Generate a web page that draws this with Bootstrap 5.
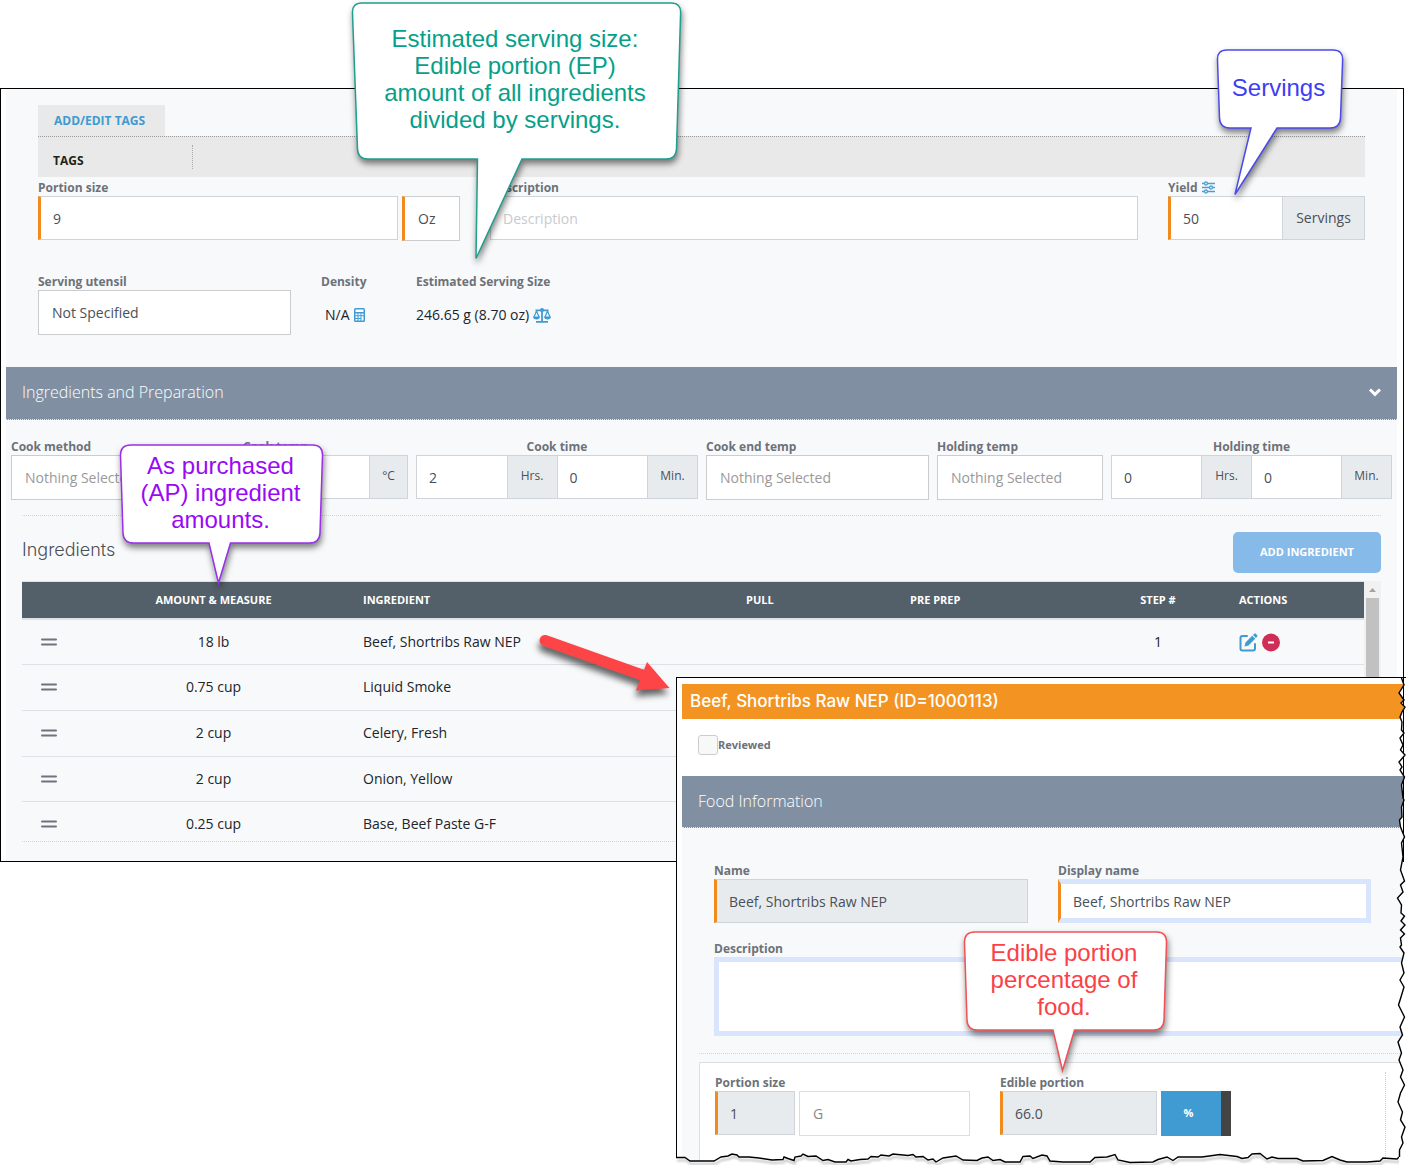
<!DOCTYPE html>
<html lang="en">
<head>
<meta charset="utf-8">
<meta name="viewport" content="width=device-width, initial-scale=1">
<title>Recipe ingredients and edible portion</title>
<link href="https://cdn.jsdelivr.net/npm/bootstrap@5.3.0/dist/css/bootstrap.min.css" rel="stylesheet">
<style>
  body { font-family: "Open Sans", "Noto Sans", sans-serif; font-size: 14px; line-height: 20px; color: #212529; background: #fff; }
  a { text-decoration: none; }
  svg { display: block; flex: none; }
  .stage { padding: 88px 7px 8px 0; overflow: hidden; }
  .shot { border: 1px solid #000; padding: 0 6px 0 5px; }
  .surface { background: #f8f9fb; }
  .tag-tab { display: inline-block; height: 31px; line-height: 31px; min-width: 127px; padding: 0 16px; background: #e9e9e9; color: #3e9bd0; font-size: 12px; font-weight: 700; }
  .tag-bar { height: 41px; background: #e9e9e9; border-top: 1px dotted #999; padding: 8px 15px 0; font-size: 12px; }
  .tag-bar strong { width: 140px; height: 24px; line-height: 31px; border-right: 1px dotted #aaa; color: #222; }
  .first { padding-top: 2px; }
  .mt-px { margin-top: 1px; }
  .desc-col { margin: 0 30px; }
  .second { padding: 32px 0; }
  .dens { width: 95px; margin-left: 30px; }
  .second .val { padding-top: 15px; white-space: nowrap; }
  .lbl { display: block; height: 17px; line-height: 17px; font-size: 12px; font-weight: 700; color: #6c7278; margin: 0; white-space: nowrap; }
  .fld.form-control { height: 44px; border: 1px solid #ced4da; border-radius: 0; padding: 0 12px; font-size: 14px; color: #495057; background: #fff; min-width: 0; }
  select.fld.form-control { height: 45px; border-color: #ccc; padding: 0 9px; }
  select.fld.unset.form-control { color: #999; }
  .fld.form-control::placeholder { color: #c8cacd; }
  .fld.req.form-control { border-left: 3px solid #f28b1d; }
  .fld.locked.form-control { background: #e8ebee; }
  .fld.ring.form-control { border: 5px solid #d9e5fd; padding: 0 10px; }
  .fld.ring.req.form-control { border-left: 3px solid #f28b1d; padding-left: 12px; }
  .input-group > .unit { border-radius: 0; border: 1px solid #ced4da; background: #e8ebee; color: #495057; justify-content: center; padding: 0 0 2px; font-size: 14px; height: 44px; }
  .input-group > .unit-s { font-size: 12px; }
  .w-f { width: 360px; } .w-oz { width: 58px; } .w-yield { width: 197px; } .w-servunit { width: 83px; }
  .w-utensil { width: 253px; }
  .u38 { width: 39px; } .u50 { width: 51px; }
  .bar { background: #8090a2; color: #fff; font-size: 16px; font-weight: 300; height: 53px; border-bottom: 1px dotted #e6e9ed; padding: 0 16px 2px; }
  .cook { padding: 18px 5px 0; gap: 8px; }
  .cook > .c1 { flex: 224 1 0; } .cook > .c2 { flex: 165 1 0; } .cook > .c3 { flex: 282 1 0; }
  .cook > .c4 { flex: 223 1 0; } .cook > .c5 { flex: 166 1 0; } .cook > .c6 { flex: 281 1 0; }
  .cook select.fld.form-control, .second select.fld.form-control, .w-oz select.fld.form-control { text-indent: 4px; }
  .ingr-area { padding-top: 15px; }
  .sep { border-top: 1px dotted #d4d7da; }
  .h-ingr { font-family: Inter, sans-serif; font-size: 18px; font-weight: 300; color: #4b4f56; line-height: 20px; margin: 8px 0 0; }
  .btn.add { width: 148px; height: 41px; padding: 0; border: 0; border-radius: 5px; background: #86bbe9; color: #fff; font-size: 11px; font-weight: 700; }
  .grid-wrap { height: 261px; overflow: hidden; border-bottom: 1px dotted #d4d7da; }
  .ingr { table-layout: fixed; margin: 0; border-top: 1px solid #dee2e6; }
  .ingr > thead > tr > th { background: #546069; color: #fff; font-size: 11px; font-weight: 700; line-height: 20px; padding: 8px 12px; border-bottom: 2px solid #dee2e6; white-space: nowrap; }
  .ingr > tbody > tr > td { background: transparent; padding: 12px; line-height: 20px; border-bottom: 1px solid #dee2e6; color: #212529; vertical-align: middle; }
  .ingr > tbody > tr.tall > td { padding-bottom: 13px; }
  .ingr .w1 { width: 54px; } .ingr .w2 { width: 275px; } .ingr .w4 { width: 164px; } .ingr .w5 { width: 191px; } .ingr .w6 { width: 138px; } .ingr .w7 { width: 137px; }
  .track { width: 17px; background: #f1f1f1; padding: 0 2px; }
  .track .thumb { height: 244px; background: #c1c1c1; }
  .icon-btn { border: 0; background: none; padding: 0; display: block; }
  .tail { height: 19px; }
  .food { position: relative; z-index: 2; margin: -185px -2px 0 676px; height: 488px; border-top: 1px solid #000; padding: 6px 0 0 6px; background: #fff; overflow: hidden; }
  .food::before { content: ""; position: absolute; left: 0; top: 0; bottom: 7px; width: 1px; background: #000; }
  .food-title { background: #f39422; color: #fff; font-family: Inter, sans-serif; font-size: 17px; font-weight: 500; line-height: 35px; padding: 0 8px; margin: 0; }
  .food .bar { height: 52px; }
  .review { height: 57px; padding: 16px 16px 0; }
  .review .form-check-input { width: 20px; height: 20px; margin: 0; border: 1px solid #ccc; border-radius: 3px; background: #f7f9f8; }
  .review label { font-size: 11px; font-weight: 700; color: #6c7278; line-height: 20px; }
  .name-row { padding: 34px 35px 0 32px; gap: 30px; }
  .w-name { flex: 314 1 0; } .w-disp { flex: 313 1 0; }
  .desc-row { margin: 17px 0 0 32px; }
  textarea.fld.ring.form-control { height: 79px; resize: none; display: block; border-right: 0; }
  .food-sep { margin: 17px 0 8px 17px; }
  .portion { border: solid #dcdee1; border-width: 1px 0 0 1px; background: #fff; margin-left: 17px; height: 112px; padding: 11px 0 0 15px; }
  .portion .cells { flex: 1; }
  .portion .edge { width: 21px; border-left: 1px dotted #ccc; margin-top: -2px; }
  .w-p1 { width: 80px; } .w-g { width: 171px; } .w-ep { width: 157px; margin-left: 30px; }
  select.fld.soft.form-control { border-color: #ddd; color: #888; text-indent: 4px; }
  .btn.pct { width: 70px; height: 45px; border: 0; border-right: 10px solid #444; border-radius: 0; background: #3f9bd1; color: #fff; font-size: 11px; font-weight: 700; padding: 0 5px 0 0; }
  .tear-r { position: absolute; right: 0; top: -1px; }
  .tear-b { position: absolute; left: 0; bottom: 0; width: calc(100% - 7px); height: 24px; }
  .tear-b .rip { filter: drop-shadow(1px 3px 1px rgba(0,0,0,.3)); }
  .callout { position: absolute; z-index: 3; font-family: "Liberation Sans", Arial, sans-serif; font-size: 24px; line-height: 27px; text-align: center; }
  .callout svg { position: absolute; left: 0; top: 0; overflow: visible; filter: drop-shadow(1px 4px 3px rgba(0,0,0,.5)); }
  .callout p { position: relative; margin: 0; white-space: nowrap; }
  .c-est { left: 350px; top: 0; width: 330px; padding-top: 25px; color: #069f89; }
  .c-srv { left: 1215px; top: 48px; width: 127px; padding-top: 26px; color: #3d3df5; }
  .c-ap { left: 119px; top: 443px; width: 203px; padding-top: 9px; color: #9a09f5; }
  .c-ep { left: 962px; top: 930px; width: 204px; padding-top: 9px; color: #fb4147; }
  .arrow { position: absolute; z-index: 3; left: 530px; top: 625px; overflow: visible; filter: drop-shadow(-1px 6px 3px rgba(0,0,0,.6)); }
</style>
</head>
<body>
<main class="stage position-relative">
  <section class="shot">
    <div class="surface">
      <div class="px-4 mx-2 pt-3">
        <a class="tag-tab" href="#tags">ADD/EDIT TAGS</a>
        <div class="tag-bar d-flex" id="tags"><strong>TAGS</strong></div>
        <div class="d-flex first">
          <div class="w-f"><label class="lbl" for="portion">Portion size</label><input id="portion" class="form-control fld req" value="9"></div>
          <div class="w-oz ms-1 pt-3 mt-px"><select class="form-control fld req" aria-label="Portion unit"><option>Oz</option></select></div>
          <div class="flex-grow-1 desc-col"><label class="lbl" for="desc">Description</label><input id="desc" class="form-control fld" placeholder="Description"></div>
          <div class="w-yield">
            <label class="lbl d-flex align-items-center gap-1" for="yield">Yield
              <svg width="13" height="13" viewBox="0 0 13 13" fill="none" stroke="#4a9fd4" stroke-width="1.3"><path d="M0 2.500h2.500M5.500 2.500H13M0 6.500h7.500M10.500 6.500H13M0 10.500h2.500M5.500 10.500H13"/><circle cx="4" cy="2.500" r="1.500"/><circle cx="9" cy="6.500" r="1.500"/><circle cx="4" cy="10.500" r="1.500"/></svg>
            </label>
            <div class="input-group flex-nowrap"><input id="yield" class="form-control fld req" value="50"><span class="input-group-text unit w-servunit">Servings</span></div>
          </div>
        </div>
        <div class="d-flex second">
          <div class="w-utensil"><label class="lbl" for="utensil">Serving utensil</label><select id="utensil" class="form-control fld"><option>Not Specified</option></select></div>
          <div class="dens"><span class="lbl">Density</span>
            <div class="val d-flex align-items-center gap-1 ps-1">N/A
              <svg width="11" height="14" viewBox="0 0 11 14"><rect width="11" height="14" rx="1.500" fill="#3f9bd1"/><path fill="#fff" d="M1.500 1.500h8v2.500h-8zM1.500 5.500h2v1.700h-2zM4.500 5.500h2v1.700h-2zM7.500 5.500h2v1.700h-2zM1.500 8.200h2v1.700h-2zM4.500 8.200h2v1.700h-2zM7.500 8.200h2v4.300h-2zM1.500 10.900h2v1.600h-2zM4.500 10.900h2v1.600h-2z"/></svg>
            </div>
          </div>
          <div><span class="lbl">Estimated Serving Size</span>
            <div class="val d-flex align-items-center gap-1">246.65 g (8.70 oz)
              <svg width="18" height="15" viewBox="0 0 18 15" fill="none" stroke="#3f9bd1"><path stroke-width="1.800" d="M2.500 2.300h13M9 1v12M3 13.800h12"/><path stroke-width="1.200" d="M3.500 3L1 9M3.500 3L6 9M14.500 3L12 9M14.500 3L17 9"/><path fill="#3f9bd1" stroke="none" d="M0 8.500h7c0 2-1.500 3-3.500 3S0 10.500 0 8.500zM11 8.500h7c0 2-1.500 3-3.500 3s-3.500-1-3.500-3z"/><circle cx="9" cy="2" r="2" fill="#3f9bd1" stroke="none"/></svg>
            </div>
          </div>
        </div>
      </div>

      <header class="bar d-flex align-items-center justify-content-between">Ingredients and Preparation
        <svg width="12" height="9" viewBox="0 0 12 9" fill="none" stroke="#fff" stroke-width="3"><path d="M1 1.500l5 4.800 5-4.800"/></svg>
      </header>

      <div class="cook d-flex">
        <div class="c1"><label class="lbl" for="cm">Cook method</label><select id="cm" class="form-control fld unset"><option>Nothing Selected</option></select></div>
        <div class="c2"><label class="lbl" for="ct">Cook temp</label><div class="input-group flex-nowrap"><input id="ct" class="form-control fld"><span class="input-group-text unit unit-s u38">°C</span></div></div>
        <div class="c3"><label class="lbl text-center" for="ch">Cook time</label><div class="input-group flex-nowrap">
          <input id="ch" class="form-control fld" value="2"><span class="input-group-text unit unit-s u50">Hrs.</span>
          <input class="form-control fld" value="0" aria-label="Cook time minutes"><span class="input-group-text unit unit-s u50">Min.</span></div></div>
        <div class="c4"><label class="lbl" for="ce">Cook end temp</label><select id="ce" class="form-control fld unset"><option>Nothing Selected</option></select></div>
        <div class="c5"><label class="lbl" for="ht">Holding temp</label><select id="ht" class="form-control fld unset"><option>Nothing Selected</option></select></div>
        <div class="c6"><label class="lbl text-center" for="hh">Holding time</label><div class="input-group flex-nowrap">
          <input id="hh" class="form-control fld" value="0"><span class="input-group-text unit unit-s u50">Hrs.</span>
          <input class="form-control fld" value="0" aria-label="Holding time minutes"><span class="input-group-text unit unit-s u50">Min.</span></div></div>
      </div>

      <div class="mx-3 ingr-area">
        <div class="sep pt-3 d-flex align-items-start justify-content-between">
          <h2 class="h-ingr">Ingredients</h2>
          <button type="button" class="btn add">ADD INGREDIENT</button>
        </div>
        <div class="grid-wrap d-flex mt-2">
          <table class="table ingr">
            <thead><tr><th class="w1"></th><th class="w2 text-center">AMOUNT &amp; MEASURE</th><th>INGREDIENT</th><th class="w4">PULL</th><th class="w5">PRE PREP</th><th class="w6 text-center">STEP #</th><th class="w7">ACTIONS</th></tr></thead>
            <tbody>
              <tr><td><svg class="mx-auto" width="16" height="8"><path stroke="#6c757d" stroke-width="2" stroke-linecap="round" d="M1 1.500h14M1 6.500h14"/></svg></td><td class="text-center">18 lb</td><td>Beef, Shortribs Raw NEP</td><td></td><td></td><td class="text-center">1</td>
                <td><div class="d-flex gap-1">
                  <button type="button" class="icon-btn" aria-label="Edit"><svg width="19" height="19" viewBox="0 0 19 19"><path fill="none" stroke="#3f9bd1" stroke-width="2" stroke-linecap="round" d="M8 3H3.500Q1.500 3 1.500 5v10.500q0 2 2 2H14q2 0 2-2V11"/><path fill="#3f9bd1" d="M5.500 13.500l1-4 6.700-6.700 3 3-6.700 6.700zM14 2l1.300-1.300q.7-.7 1.500 0L18.200 2.200q.7.700 0 1.400L16.900 5z"/></svg></button>
                  <button type="button" class="icon-btn" aria-label="Remove"><svg width="18" height="19" viewBox="0 0 18 19"><circle cx="9" cy="9.500" r="9" fill="#cf2f57"/><path d="M6 9.500h6" stroke="#fff" stroke-width="2"/></svg></button>
                </div></td></tr>
              <tr class="tall"><td><svg class="mx-auto" width="16" height="8"><path stroke="#6c757d" stroke-width="2" stroke-linecap="round" d="M1 1.500h14M1 6.500h14"/></svg></td><td class="text-center">0.75 cup</td><td>Liquid Smoke</td><td></td><td></td><td></td><td></td></tr>
              <tr class="tall"><td><svg class="mx-auto" width="16" height="8"><path stroke="#6c757d" stroke-width="2" stroke-linecap="round" d="M1 1.500h14M1 6.500h14"/></svg></td><td class="text-center">2 cup</td><td>Celery, Fresh</td><td></td><td></td><td></td><td></td></tr>
              <tr><td><svg class="mx-auto" width="16" height="8"><path stroke="#6c757d" stroke-width="2" stroke-linecap="round" d="M1 1.500h14M1 6.500h14"/></svg></td><td class="text-center">2 cup</td><td>Onion, Yellow</td><td></td><td></td><td></td><td></td></tr>
              <tr><td><svg class="mx-auto" width="16" height="8"><path stroke="#6c757d" stroke-width="2" stroke-linecap="round" d="M1 1.500h14M1 6.500h14"/></svg></td><td class="text-center">0.25 cup</td><td>Base, Beef Paste G-F</td><td></td><td></td><td></td><td></td></tr>
            </tbody>
          </table>
          <div class="track"><svg width="13" height="17"><path fill="#a3a3a3" d="M3 11h7L6.500 7z"/></svg><div class="thumb"></div></div>
        </div>
      </div>
      <div class="tail"></div>
    </div>
  </section>

  <section class="food">
    <h2 class="food-title">Beef, Shortribs Raw NEP (ID=1000113)</h2>
    <div class="review d-flex"><input type="checkbox" class="form-check-input" id="rev"><label for="rev">Reviewed</label></div>
    <header class="bar d-flex align-items-center">Food Information</header>
    <div class="surface">
      <div class="name-row d-flex">
        <div class="w-name"><label class="lbl" for="nm">Name</label><input id="nm" class="form-control fld req locked" value="Beef, Shortribs Raw NEP" readonly></div>
        <div class="w-disp"><label class="lbl" for="dn">Display name</label><input id="dn" class="form-control fld ring req" value="Beef, Shortribs Raw NEP"></div>
      </div>
      <div class="desc-row"><label class="lbl" for="fd">Description</label><textarea id="fd" class="form-control fld ring"></textarea></div>
      <div class="sep food-sep"></div>
      <div class="portion d-flex">
        <div class="cells d-flex">
          <div class="w-p1"><label class="lbl" for="ps">Portion size</label><input id="ps" class="form-control fld req locked" value="1" readonly></div>
          <div class="w-g ms-1 pt-3 mt-px"><select class="form-control fld soft" aria-label="Unit"><option>G</option></select></div>
          <div class="w-ep"><label class="lbl" for="ep">Edible portion</label><input id="ep" class="form-control fld req locked" value="66.0" readonly></div>
          <div class="ms-1 pt-3 mt-px"><button type="button" class="btn pct">%</button></div>
        </div>
        <div class="edge"></div>
      </div>
    </div>
    <svg class="tear-b" viewBox="0 0 723 24" preserveAspectRatio="none">
      <path fill="#fff" d="M-2 26V16.500H9L14 20H38L45 16L52 15L56 13L61 14L63 16L73 16L83 17L96 19L107 18.500L108 16L112 17.500L118 19.500L119 16L125 15L127 13L132 15.500L140 15L147 19.500L152 18.500L159 21H170L172 18.500L175 20L184 18.500L192 18L195 15.500L202 16L205 14L213 15L217 13L232 14.500L237 13.500L240 16L247 15.500L252 19L257 18L260 21L267 17L280 15L287 19L301 19.500L306 17L312 16L317 19.500L324 18.500L329 21L344 21L347 15.500L354 15L357 17.500L366 14L371 15L374 20L387 21L414 21L419 16.500L431 16L439 13.500L442 19L454 21.500L477 21L482 18.500L491 16L497 19.500L502 16L526 16L544 13.500L561 15.500L566 17.500L572 16.500L576 13L584 12.500L591 18L596 16L602 17.500L621 17.500L627 20L647 19.500L656 15.500L664 19L671 21L691 21L704 20L707 17L721 18L724 15V26z"/>
      <path class="rip" fill="none" stroke="#000" stroke-width="1.400" d="M0 16.500H9L14 20H38L45 16L52 15L56 13L61 14L63 16L73 16L83 17L96 19L107 18.500L108 16L112 17.500L118 19.500L119 16L125 15L127 13L132 15.500L140 15L147 19.500L152 18.500L159 21H170L172 18.500L175 20L184 18.500L192 18L195 15.500L202 16L205 14L213 15L217 13L232 14.500L237 13.500L240 16L247 15.500L252 19L257 18L260 21L267 17L280 15L287 19L301 19.500L306 17L312 16L317 19.500L324 18.500L329 21L344 21L347 15.500L354 15L357 17.500L366 14L371 15L374 20L387 21L414 21L419 16.500L431 16L439 13.500L442 19L454 21.500L477 21L482 18.500L491 16L497 19.500L502 16L526 16L544 13.500L561 15.500L566 17.500L572 16.500L576 13L584 12.500L591 18L596 16L602 17.500L621 17.500L627 20L647 19.500L656 15.500L664 19L671 21L691 21L704 20L707 17L721 18L723 16"/>
    </svg>
    <svg class="tear-r" width="14" height="488" viewBox="1392 677 14 488">
      <defs><clipPath id="out"><path d="M1406 677H1401.500L1404 685 1399 693 1404 700 1401 703 1405 707 1402 712 1400 717 1402 722 1401.500 730 1404 733 1400 738 1403 745 1400.500 750 1405 755 1399 762 1402 767 1400 770 1404.500 777 1401.500 785 1403 798 1404 800 1401.500 807 1402 817 1399.500 820 1400.500 827 1404.500 837 1401.500 843 1403 857 1400.500 870H1406z"/></clipPath></defs>
      <path fill="#fff" d="M1407 678H1401.500L1404 685 1399 693 1404 700 1401 703 1405 707 1402 712 1400 717 1402 722 1401.500 730 1404 733 1400 738 1403 745 1400.500 750 1405 755 1399 762 1402 767 1400 770 1404.500 777 1401.500 785 1403 798 1404 800 1401.500 807 1402 817 1399.500 820 1400.500 827 1404.500 837 1401.500 843 1403 857 1400.500 870 1404.500 881 1400.500 885 1403 892 1397.500 898 1401.500 905 1401 913 1404.500 916 1401 921 1405 925 1400.500 930 1404.500 934 1400.500 938 1401.500 945 1400 947 1404 953 1401.500 963 1404 973 1400 980 1404 987 1401 997 1398.500 1005 1404.500 1017 1400 1027 1402.500 1035 1398 1042 1401.500 1053 1399 1060 1403 1070 1400.500 1077 1404.500 1085 1400.500 1093 1398 1102 1402.500 1112 1400.500 1120 1405 1127 1401.500 1137 1403 1143 1399.500 1150V1157V1166H1407z"/>
      <path fill="none" stroke="#000" stroke-width="1.400" d="M1401.500 678L1404 685 1399 693 1404 700 1401 703 1405 707 1402 712 1400 717 1402 722 1401.500 730 1404 733 1400 738 1403 745 1400.500 750 1405 755 1399 762 1402 767 1400 770 1404.500 777 1401.500 785 1403 798 1404 800 1401.500 807 1402 817 1399.500 820 1400.500 827 1404.500 837 1401.500 843 1403 857 1400.500 870 1404.500 881 1400.500 885 1403 892 1397.500 898 1401.500 905 1401 913 1404.500 916 1401 921 1405 925 1400.500 930 1404.500 934 1400.500 938 1401.500 945 1400 947 1404 953 1401.500 963 1404 973 1400 980 1404 987 1401 997 1398.500 1005 1404.500 1017 1400 1027 1402.500 1035 1398 1042 1401.500 1053 1399 1060 1403 1070 1400.500 1077 1404.500 1085 1400.500 1093 1398 1102 1402.500 1112 1400.500 1120 1405 1127 1401.500 1137 1403 1143 1399.500 1150V1157"/>
      <path d="M1403.500 677V862" stroke="#000" clip-path="url(#out)"/>
    </svg>
  </section>

  <svg class="arrow" width="140" height="70" viewBox="530 625 140 70"><path d="M545 640.500L645 676" stroke="#fd4446" stroke-width="11" stroke-linecap="round"/><path fill="#fd4446" d="M647 662L669.500 688L636 690.500z"/></svg>

  <div class="callout c-est">
    <svg width="332" height="262" viewBox="350 0 332 262"><path fill="#fff" stroke="#1f9f8e" stroke-width="1.500" d="M362 3H671Q681 3 680.600 13L676.500 149Q676 159 666 159H522L476 258.500L477.500 159H368Q358 159 357.500 149L352.500 13Q352 3 362 3z"/></svg>
    <p>Estimated serving size:<br>Edible portion (EP)<br>amount of all ingredients<br>divided by servings.</p>
  </div>
  <div class="callout c-srv">
    <svg width="127" height="150" viewBox="1215 48 127 150"><path fill="#fff" stroke="#4b4bea" stroke-width="1.500" d="M1227 50H1333Q1343 50 1342.600 60L1340.500 118Q1340 128 1330 128H1277L1235 194.500L1251 128H1230Q1220 128 1219.500 118L1217.500 60Q1217 50 1227 50z"/></svg>
    <p>Servings</p>
  </div>
  <div class="callout c-ap">
    <svg width="204" height="145" viewBox="119 443 204 145"><path fill="#fff" stroke="#9a2fe8" stroke-width="1.500" d="M131 445H312.500Q322.500 445 322.500 455L320 533Q319.500 543 309.500 543H230.500L218.500 583L209 543H133.500Q123.500 543 123 533L120.500 455Q120.500 445 131 445z"/></svg>
    <p>As purchased<br>(AP) ingredient<br>amounts.</p>
  </div>
  <div class="callout c-ep">
    <svg width="205" height="145" viewBox="962 930 205 145"><path fill="#fff" stroke="#ef5357" stroke-width="1.500" d="M975 932H1156.500Q1166.500 932 1166.500 942L1164 1020Q1163.500 1030 1153.500 1030H1074.500L1062.500 1070.500L1053 1030H977.500Q967.500 1030 967 1020L964.500 942Q964.500 932 975 932z"/></svg>
    <p>Edible portion<br>percentage of<br>food.</p>
  </div>
</main>
<script src="https://cdn.jsdelivr.net/npm/bootstrap@5.3.0/dist/js/bootstrap.bundle.min.js"></script>
</body>
</html>
